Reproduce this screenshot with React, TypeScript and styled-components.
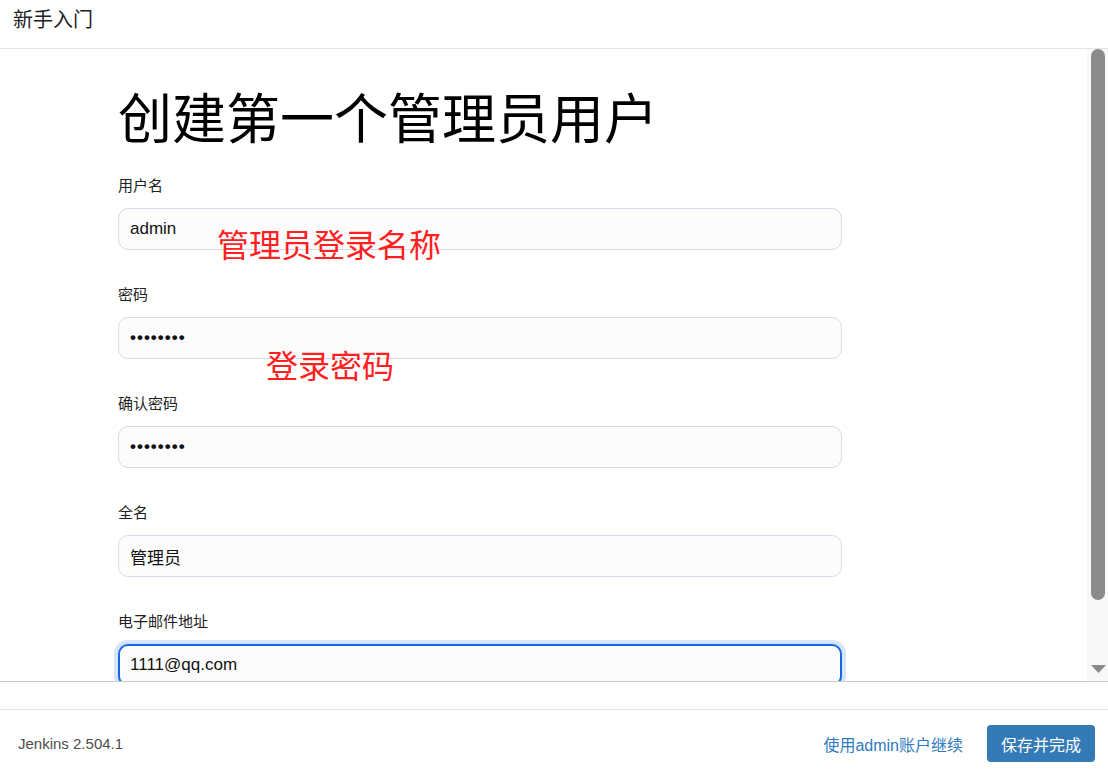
import React from "react";
import styled, { createGlobalStyle } from "styled-components";

const Global = createGlobalStyle`
  html, body { margin: 0; padding: 0; background: #fff; }
  body { font-family: "Liberation Sans", "Noto Sans CJK SC", sans-serif; color: #111; }
  * { box-sizing: border-box; }
`;

const Page = styled.div`
  width: 1108px;
  height: 774px;
  display: flex;
  flex-direction: column;
  overflow: hidden;
  background: #fff;
`;

const Header = styled.header`
  flex: none;
  height: 49px;
  border-bottom: 1px solid #e5e5e5;
  display: flex;
  align-items: flex-start;
  padding: 6px 0 0 13px;
  font-family: "Noto Sans CJK SC", sans-serif;
  font-size: 20px;
  line-height: 26px;
  color: #222;
`;

const Body = styled.div`
  flex: none;
  height: 633px;
  display: flex;
  border-bottom: 1px solid #c8c8c8;
`;

const Scroller = styled.div`
  flex: 1;
  overflow: hidden;
`;

const Form = styled.form`
  position: relative;
  padding: 34px 0 0 118px;
`;

const Title = styled.h1`
  margin: 0 0 27px;
  font-family: "Noto Sans CJK SC", sans-serif;
  font-size: 54px;
  font-weight: 400;
  line-height: 66px;
  color: #000;
`;

const Field = styled.div`
  display: flex;
  flex-direction: column;
  margin-bottom: 35px;
`;

const Label = styled.label`
  font-size: 15px;
  line-height: 20px;
  margin-bottom: 12px;
  color: #222;
`;

const Input = styled.input<{ $focused?: boolean }>`
  width: 724px;
  height: 42px;
  border: ${(p) => (p.$focused ? "2px solid #1268e6" : "1px solid #d5dae6")};
  border-radius: 10px;
  background: #fcfcfd;
  padding: 0 ${(p) => (p.$focused ? "10px" : "11px")};
  font-family: "Liberation Sans", "Noto Sans CJK SC", sans-serif;
  font-size: 17px;
  color: #111;
  outline: none;
  box-shadow: ${(p) => (p.$focused ? "0 0 0 4px #d6e5fb" : "none")};

  &[type="password"] {
    letter-spacing: 1px;
    font-weight: 700;
  }
`;

const Note = styled.span<{ $left: number; $top: number }>`
  position: absolute;
  left: ${(p) => p.$left}px;
  top: ${(p) => p.$top}px;
  font-family: "Noto Sans CJK SC", sans-serif;
  font-size: 32px;
  line-height: 32px;
  color: #ff2121;
  white-space: nowrap;
  pointer-events: none;
`;

const Track = styled.div`
  flex: none;
  width: 21px;
  background: #f8f8f8;
  display: flex;
  flex-direction: column;
`;

const Thumb = styled.div`
  height: 551px;
  margin: 0 3px 0 4px;
  background: #8b8b8b;
  border-radius: 7px;
`;

const TrackFill = styled.div`
  flex: 1;
`;

const ArrowButton = styled.div`
  height: 21px;
  display: flex;
  justify-content: center;
  padding: 5px 0 0 1px;
`;

const Spacer = styled.div`
  flex: none;
  height: 27px;
`;

const Footer = styled.footer`
  flex: none;
  height: 65px;
  border-top: 1px solid #e5e5e5;
  display: flex;
  align-items: center;
  justify-content: space-between;
  padding: 3px 13px 0 18px;
`;

const Version = styled.span`
  font-size: 15px;
  color: #4d4d4d;
`;

const Actions = styled.div`
  display: flex;
  align-items: center;
  gap: 24px;
`;

const Link = styled.a`
  font-size: 16px;
  color: #2f7ac0;
  text-decoration: none;
`;

const Button = styled.button`
  height: 37px;
  padding: 0 14px;
  border: none;
  border-radius: 4px;
  background: #337ab7;
  color: #fff;
  font-family: "Noto Sans CJK SC", sans-serif;
  font-size: 16px;
`;

const fields: { label: string; value: string; type?: string; focused?: boolean }[] = [
  { label: "用户名", value: "admin" },
  { label: "密码", value: "12345678", type: "password" },
  { label: "确认密码", value: "12345678", type: "password" },
  { label: "全名", value: "管理员" },
  { label: "电子邮件地址", value: "1111@qq.com", focused: true },
];

export default function App() {
  return (
    <>
      <Global />
      <Page>
        <Header>新手入门</Header>
        <Body>
          <Scroller>
            <Form onSubmit={(e) => e.preventDefault()}>
              <Title>创建第一个管理员用户</Title>
              {fields.map((f) => (
                <Field key={f.label}>
                  <Label>{f.label}</Label>
                  <Input
                    type={f.type ?? "text"}
                    value={f.value}
                    readOnly
                    $focused={f.focused}
                  />
                </Field>
              ))}
              <Note $left={217} $top={178}>管理员登录名称</Note>
              <Note $left={266} $top={299}>登录密码</Note>
            </Form>
          </Scroller>
          <Track>
            <Thumb />
            <TrackFill />
            <ArrowButton>
              <svg width="15" height="8" viewBox="0 0 15 8">
                <polygon points="0,0 15,0 7.5,8" fill="#8a8a8a" />
              </svg>
            </ArrowButton>
          </Track>
        </Body>
        <Spacer />
        <Footer>
          <Version>Jenkins 2.504.1</Version>
          <Actions>
            <Link href="#">使用admin账户继续</Link>
            <Button type="button">保存并完成</Button>
          </Actions>
        </Footer>
      </Page>
    </>
  );
}
